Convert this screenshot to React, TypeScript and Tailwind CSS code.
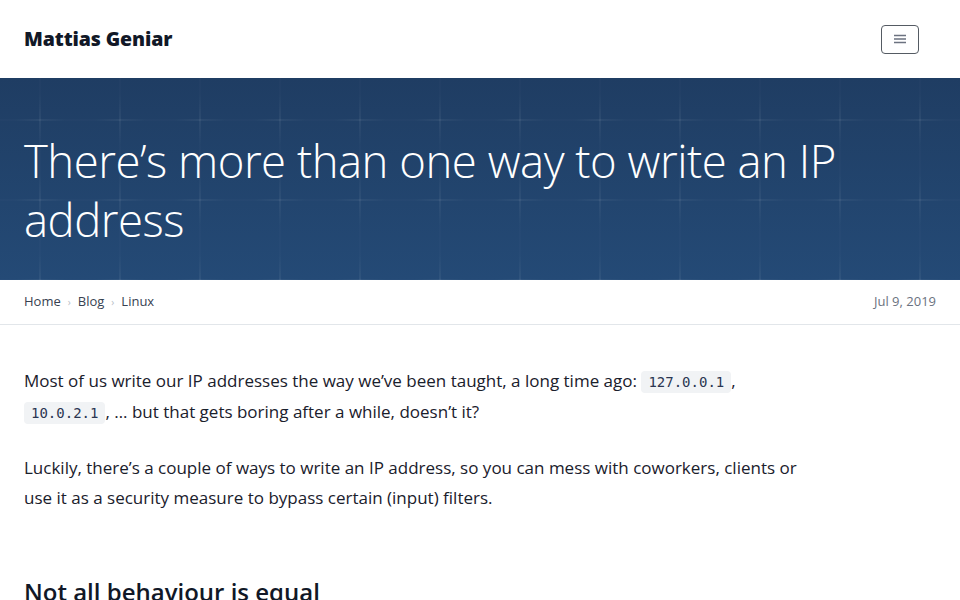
import React from "react";

// Plus-sign grid that decorates the title banner
function GridPattern() {
  return (
    <svg className="absolute inset-0 h-full w-full" aria-hidden="true">
      <defs>
        <linearGradient id="fadeH" x1="0" x2="1" y1="0" y2="0">
          <stop offset="0" stopColor="#ffffff" stopOpacity="0" />
          <stop offset="0.5" stopColor="#ffffff" stopOpacity="0.09" />
          <stop offset="1" stopColor="#ffffff" stopOpacity="0" />
        </linearGradient>
        <linearGradient id="fadeV" x1="0" x2="0" y1="0" y2="1">
          <stop offset="0" stopColor="#ffffff" stopOpacity="0" />
          <stop offset="0.5" stopColor="#ffffff" stopOpacity="0.09" />
          <stop offset="1" stopColor="#ffffff" stopOpacity="0" />
        </linearGradient>
        <pattern id="plus" width="80" height="80" patternUnits="userSpaceOnUse" x="0" y="2">
          <rect x="39.5" y="0" width="1" height="80" fill="#ffffff" fillOpacity="0.025" />
          <rect x="0" y="39.5" width="80" height="1" fill="#ffffff" fillOpacity="0.025" />
          <rect x="39.5" y="14" width="1" height="52" fill="url(#fadeV)" />
          <rect x="14" y="39.5" width="52" height="1" fill="url(#fadeH)" />
        </pattern>
      </defs>
      <rect width="100%" height="100%" fill="url(#plus)" />
    </svg>
  );
}

function Code({ children }: { children: React.ReactNode }) {
  return (
    <code className="rounded bg-[#f1f3f5] px-[7px] py-[3px] font-['DejaVu_Sans_Mono',monospace] text-[14px] text-[#2b3652]">
      {children}
    </code>
  );
}

export default function App() {
  return (
    <div className="min-h-screen bg-white font-['Open_Sans','Noto_Sans',sans-serif] text-[#1a202c]">
      <header className="flex h-[78px] items-center justify-between px-6">
        <a className="text-[19.5px] font-extrabold tracking-[-0.1px] text-[#111827]">Mattias Geniar</a>
        <button className="mr-[17px] flex h-[29px] w-[38px] items-center justify-center rounded-[4px] border border-[#555b63]">
          <svg width="14" height="10" viewBox="0 0 14 10" fill="none" stroke="#6b7280" strokeWidth="1.3">
            <path d="M1 1.5h12M1 5h12M1 8.5h12" />
          </svg>
        </button>
      </header>

      <section className="relative h-[202px] overflow-hidden bg-gradient-to-b from-[#1f3d63] to-[#244a76]">
        <GridPattern />
        <h1 className="relative px-6 pt-[53px] text-[45.5px] font-light leading-[59px] tracking-[-0.5px] text-white">
          There’s more than one way to write an IP address
        </h1>
      </section>

      <nav className="flex h-[45px] items-center justify-between border-b border-[#e2e6ea] px-6 text-[13px]">
        <div className="flex items-center text-[#374151]">
          <span>Home</span>
          <span className="mx-[7px] text-[10px] text-[#b8bec6]">›</span>
          <span>Blog</span>
          <span className="mx-[7px] text-[10px] text-[#b8bec6]">›</span>
          <span>Linux</span>
        </div>
        <span className="text-[#6b7280]">Jul 9, 2019</span>
      </nav>

      <main className="max-w-[826px] px-6 pt-[41px] text-[17px] leading-[30px]">
        <p>
          Most of us write our IP addresses the way we’ve been taught, a long time ago: <Code>127.0.0.1</Code>,{" "}
          <Code>10.0.2.1</Code>, … but that gets boring after a while, doesn’t it?
        </p>
        <p className="mt-[25px]">
          Luckily, there’s a couple of ways to write an IP address, so you can mess with coworkers, clients or use it as a
          security measure to bypass certain (input) filters.
        </p>
        <h2 className="mt-[63px] text-[24px] font-semibold leading-[32px] text-[#111827]">Not all behaviour is equal</h2>
      </main>
    </div>
  );
}
